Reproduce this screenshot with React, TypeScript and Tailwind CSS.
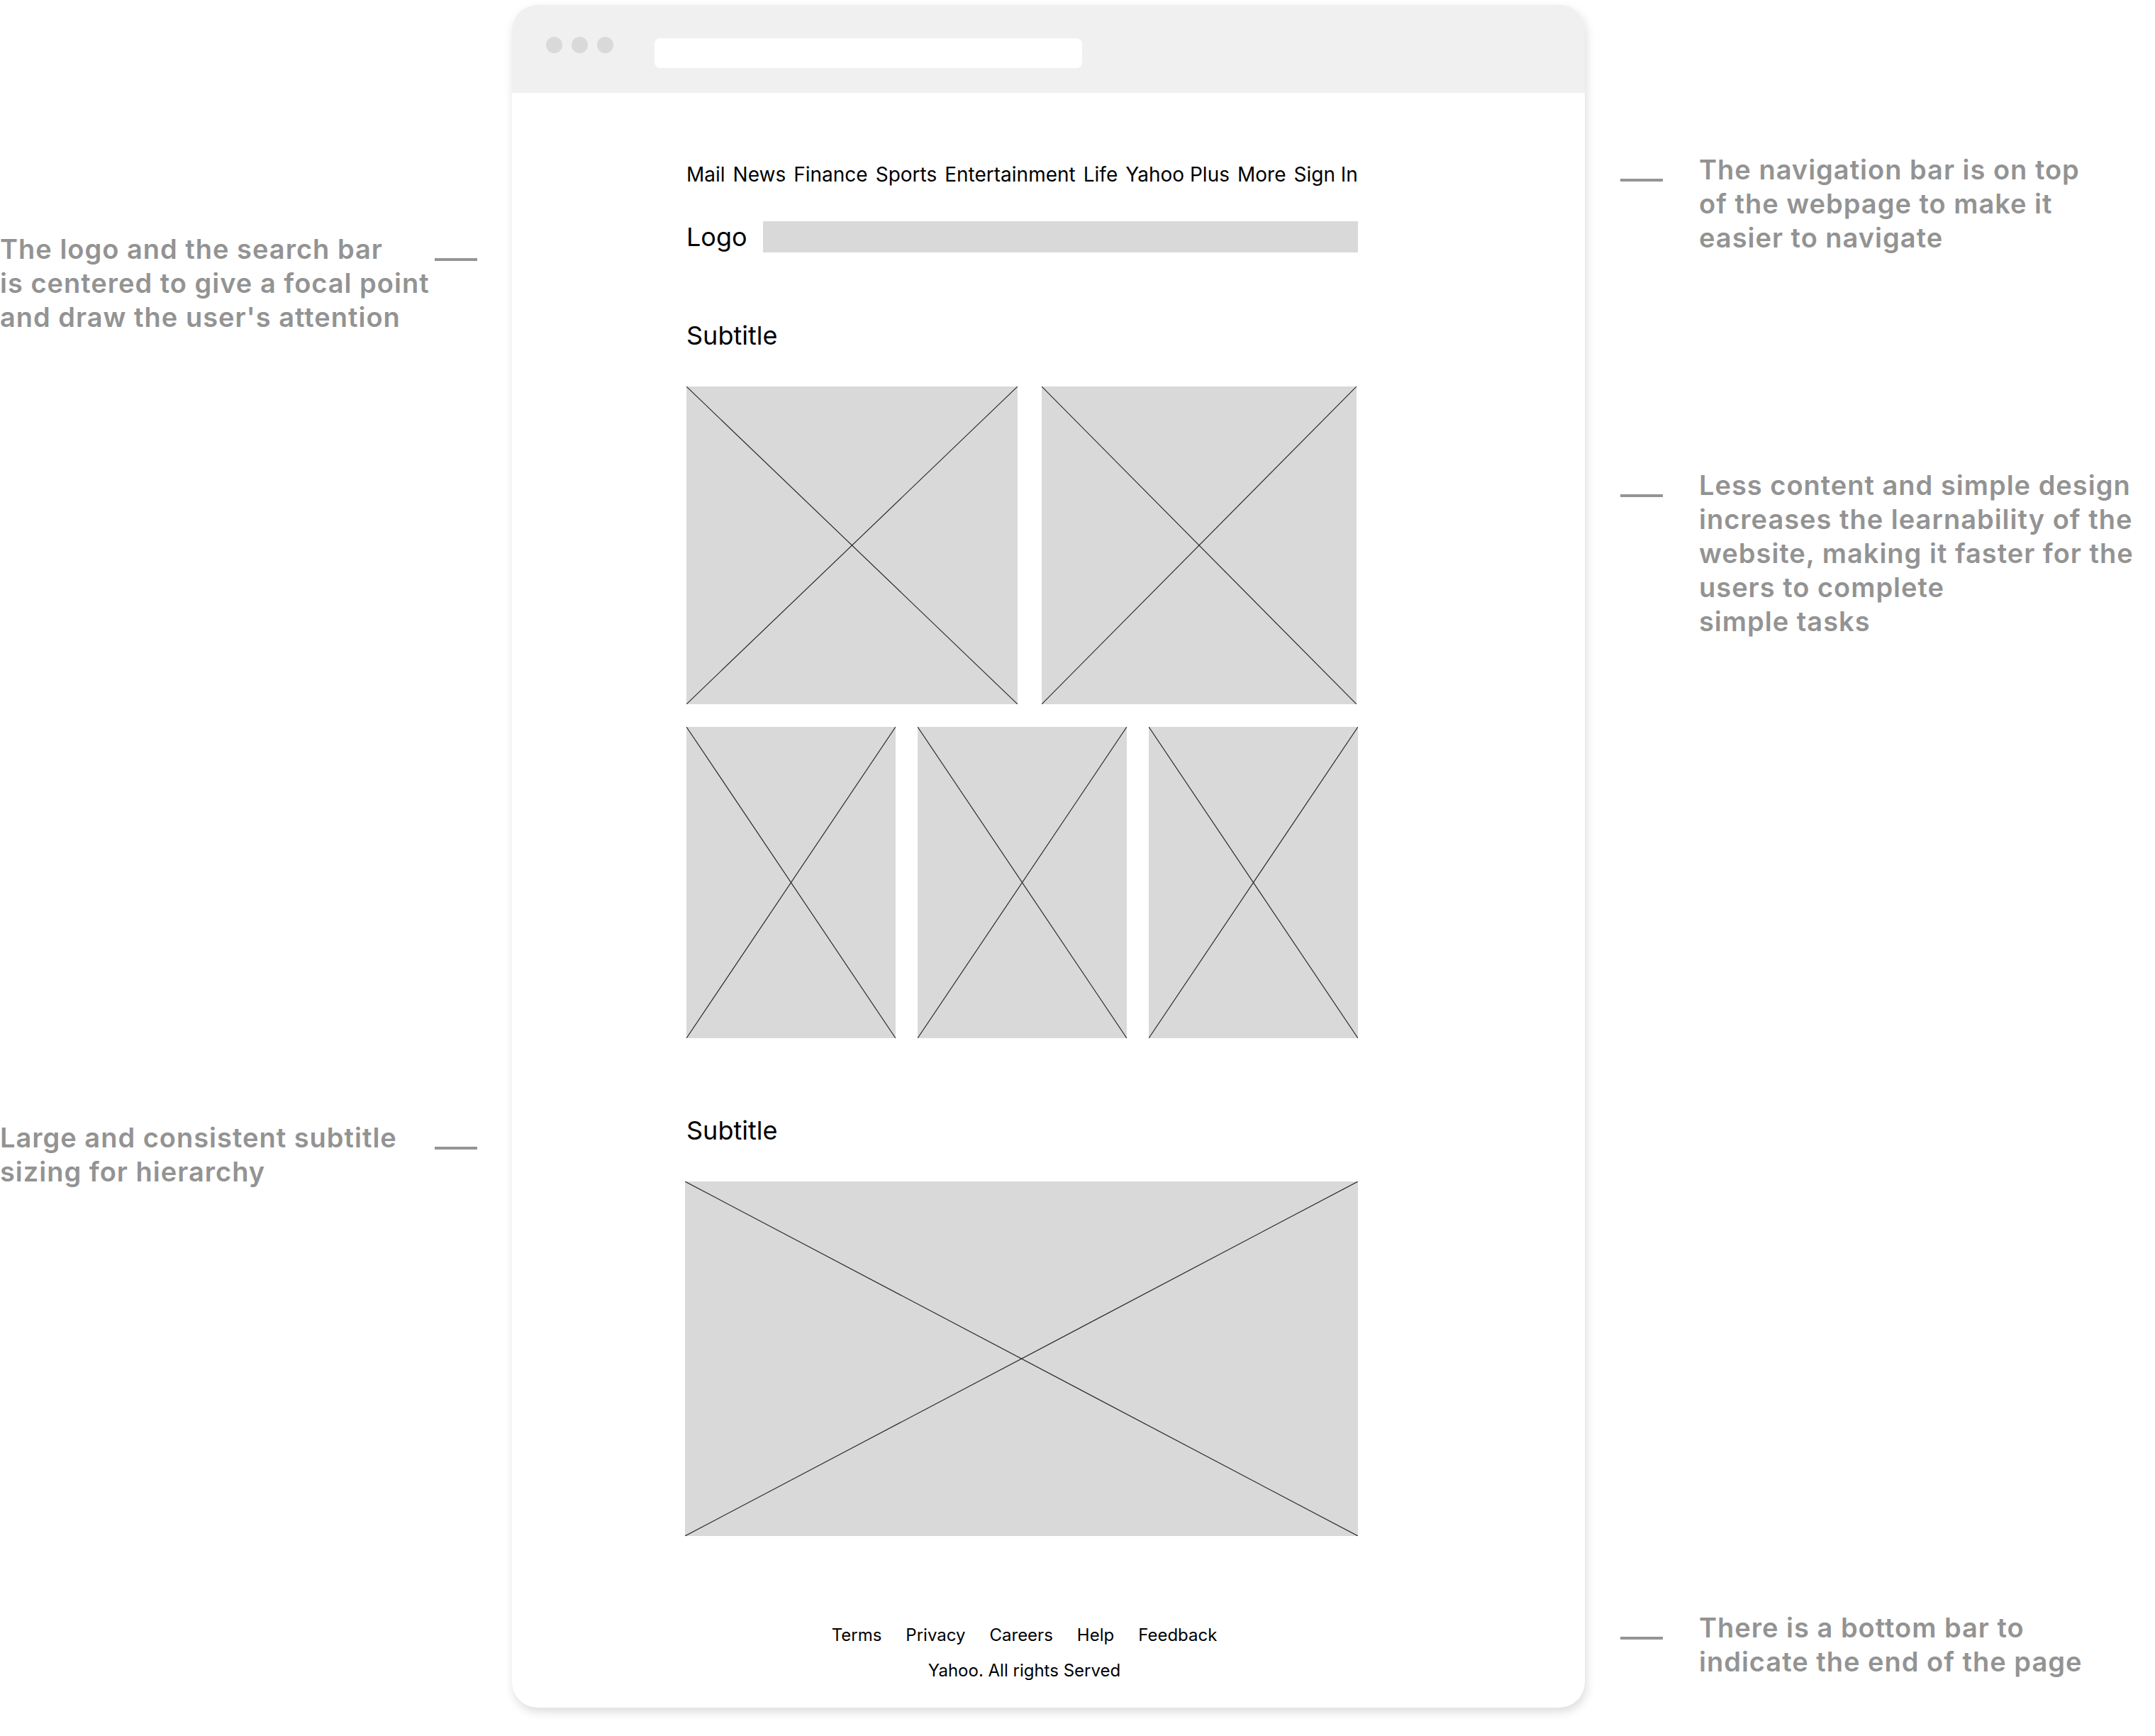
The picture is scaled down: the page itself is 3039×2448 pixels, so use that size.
import React from "react";

function Placeholder({ className }: { className: string }) {
  return (
    <div className={"relative bg-[#d9d9d9] " + className}>
      <svg className="absolute inset-0 h-full w-full" viewBox="0 0 100 100" preserveAspectRatio="none">
        <line x1="0" y1="0" x2="100" y2="100" stroke="#2a2a2a" strokeWidth="1.2" vectorEffect="non-scaling-stroke" />
        <line x1="100" y1="0" x2="0" y2="100" stroke="#2a2a2a" strokeWidth="1.2" vectorEffect="non-scaling-stroke" />
      </svg>
    </div>
  );
}

function Dash() {
  return <div className="mt-[37px] h-[4px] w-[60px] shrink-0 bg-[#959595]" />;
}

const noteText = "whitespace-nowrap text-[38px] leading-[48px] font-semibold tracking-[1px] text-[#939393]";

export default function App() {
  const nav = ["Mail", "News", "Finance", "Sports", "Entertainment", "Life", "Yahoo Plus", "More", "Sign In"];
  const foot = ["Terms", "Privacy", "Careers", "Help", "Feedback"];
  return (
    <div className="flex h-[2448px] w-[3039px] overflow-hidden bg-white font-['Inter',sans-serif]">
      {/* Left annotations */}
      <div className="flex w-[722px] shrink-0 flex-col">
        <div className="mt-[327px] flex items-start">
          <div className={"w-[613px] " + noteText}>
            The logo and the search bar
            <br />
            is centered to give a focal point
            <br />
            and draw the user's attention
          </div>
          <Dash />
        </div>
        <div className="mt-[1109px] flex items-start">
          <div className={"w-[613px] " + noteText}>
            Large and consistent subtitle
            <br />
            sizing for hierarchy
          </div>
          <Dash />
        </div>
      </div>

      {/* Browser frame */}
      <div className="mt-[7px] flex h-[2401px] w-[1513px] shrink-0 flex-col overflow-hidden rounded-[36px] bg-white shadow-[2px_6px_14px_rgba(0,0,0,0.14)]">
        <div className="flex h-[124px] shrink-0 items-start bg-[#f0f0f0] pl-[48px] pt-[45px]">
          <div className="flex gap-[13px]">
            <div className="h-[23px] w-[23px] rounded-full bg-[#d9d9d9]" />
            <div className="h-[23px] w-[23px] rounded-full bg-[#d9d9d9]" />
            <div className="h-[23px] w-[23px] rounded-full bg-[#d9d9d9]" />
          </div>
          <div className="ml-[58px] mt-[2px] h-[42px] w-[603px] rounded-[8px] bg-white" />
        </div>

        <div className="flex flex-col pl-[246px] text-black">
          <div className="w-[947px]">
            <nav className="mt-[97px] flex h-[36px] justify-between text-[28px] leading-[36px]">
              {nav.map((n) => (
                <span key={n} className="whitespace-nowrap">
                  {n}
                </span>
              ))}
            </nav>

            <div className="mt-[48px] flex h-[44px] items-center">
              <div className="w-[108px] shrink-0 text-[36px] leading-[44px]">Logo</div>
              <div className="h-[44px] flex-1 bg-[#d9d9d9]" />
            </div>

            <div className="mt-[95px] text-[36px] leading-[44px]">Subtitle</div>

            <div className="mt-[50px] flex gap-[34px]">
              <Placeholder className="h-[448px] w-[467px]" />
              <Placeholder className="h-[448px] w-[444px]" />
            </div>

            <div className="mt-[32px] grid grid-cols-3 gap-[31px]">
              <Placeholder className="h-[439px]" />
              <Placeholder className="h-[439px]" />
              <Placeholder className="h-[439px]" />
            </div>

            <div className="mt-[108px] text-[36px] leading-[44px]">Subtitle</div>

            <Placeholder className="-ml-[2px] mt-[50px] h-[500px] w-[949px]" />

            <div className="mt-[125px] flex justify-center gap-[34px] pl-[6px] text-[24px] leading-[30px]">
              {foot.map((f) => (
                <span key={f}>{f}</span>
              ))}
            </div>
            <div className="mt-[20px] pl-[6px] text-center text-[24px] leading-[30px]">Yahoo. All rights Served</div>
          </div>
        </div>
      </div>

      {/* Right annotations */}
      <div className="flex flex-1 flex-col pl-[50px]">
        <div className="mt-[215px] flex items-start gap-[51px]">
          <Dash />
          <div className={noteText}>
            The navigation bar is on top
            <br />
            of the webpage to make it
            <br />
            easier to navigate
          </div>
        </div>
        <div className="mt-[301px] flex items-start gap-[51px]">
          <Dash />
          <div className={noteText}>
            Less content and simple design
            <br />
            increases the learnability of the
            <br />
            website, making it faster for the
            <br />
            users to complete
            <br />
            simple tasks
          </div>
        </div>
        <div className="mt-[1371px] flex items-start gap-[51px]">
          <Dash />
          <div className={noteText}>
            There is a bottom bar to
            <br />
            indicate the end of the page
          </div>
        </div>
      </div>
    </div>
  );
}
